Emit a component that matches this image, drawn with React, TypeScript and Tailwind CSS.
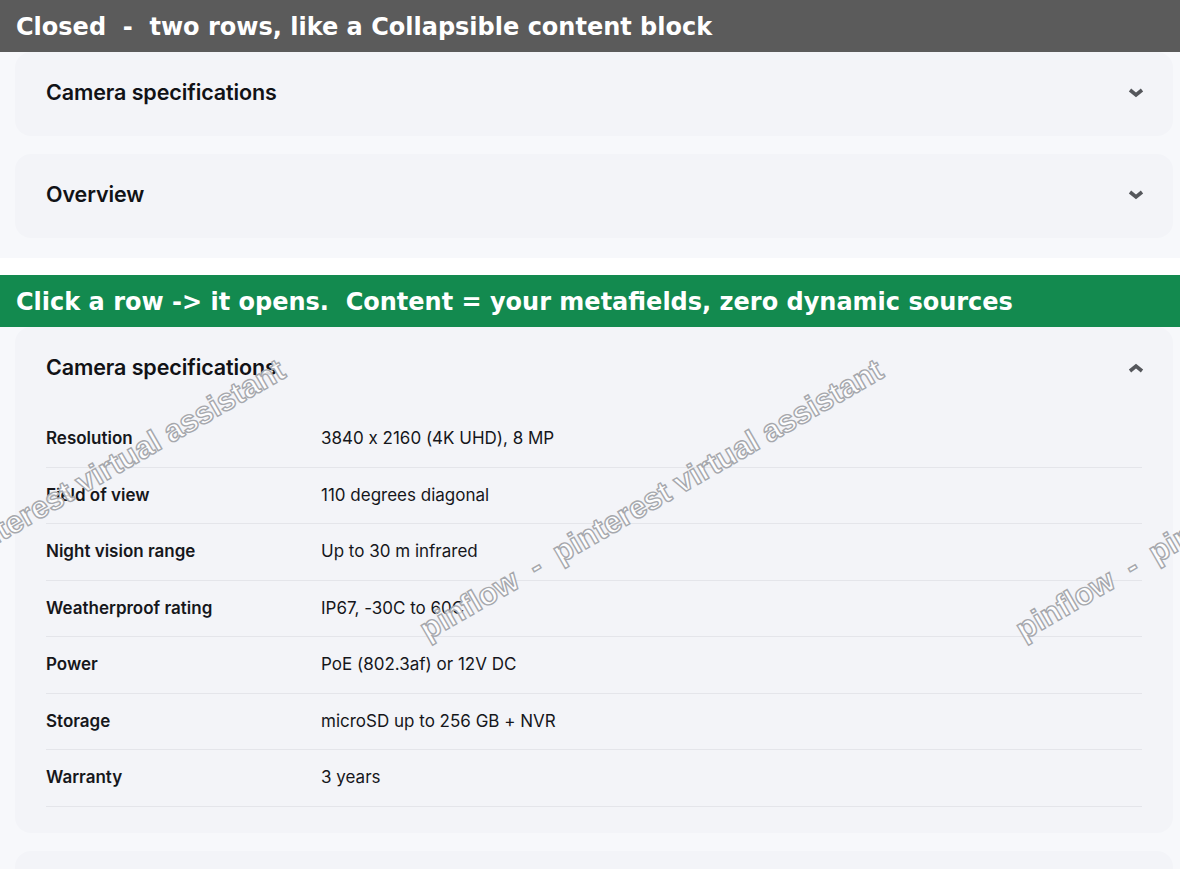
import { useState } from 'react';

interface Spec {
  label: string;
  value: string;
}

const specs: Spec[] = [
  { label: 'Resolution', value: '3840 x 2160 (4K UHD), 8 MP' },
  { label: 'Field of view', value: '110 degrees diagonal' },
  { label: 'Night vision range', value: 'Up to 30 m infrared' },
  { label: 'Weatherproof rating', value: 'IP67, -30C to 60C' },
  { label: 'Power', value: 'PoE (802.3af) or 12V DC' },
  { label: 'Storage', value: 'microSD up to 256 GB + NVR' },
  { label: 'Warranty', value: '3 years' },
];

const bodyFont = { fontFamily: 'Inter, "Noto Sans", sans-serif' };
const bannerFont = { fontFamily: '"DejaVu Sans", sans-serif' };

function Chevron({ up }: { up?: boolean }) {
  return (
    <svg width="16" height="10" viewBox="0 0 16 10" className="text-[#55575c]">
      <polyline
        points={up ? '2,8 8,3 14,8' : '2,2 8,7 14,2'}
        fill="none"
        stroke="currentColor"
        strokeWidth="3.6"
        strokeLinejoin="miter"
      />
    </svg>
  );
}

function Row({ title, open, onToggle, children }: {
  title: string;
  open: boolean;
  onToggle: () => void;
  children?: React.ReactNode;
}) {
  return (
    <div className="rounded-2xl bg-[#f3f4f8]">
      <button
        onClick={onToggle}
        className="flex h-[84px] w-full items-center justify-between pb-[3px] pl-[31px] pr-[29px] text-left"
      >
        <span className="text-[21.5px] font-semibold tracking-[-0.1px] text-[#111216]">{title}</span>
        <Chevron up={open} />
      </button>
      {open && <div className="px-[31px] pb-[26px]">{children}</div>}
    </div>
  );
}

function Watermark({ className }: { className: string }) {
  return (
    <div
      className={`pointer-events-none absolute origin-bottom-left rotate-[-30deg] whitespace-pre text-[31px] leading-none font-bold text-white/85 ${className}`}
      style={{ fontFamily: '"Liberation Sans", sans-serif', WebkitTextStroke: '1.4px #a6a8ad' }}
    >
      pinflow  -  pinterest virtual assistant
    </div>
  );
}

export default function App() {
  const [openA, setOpenA] = useState(false);
  const [openB, setOpenB] = useState(false);
  const [openC, setOpenC] = useState(true);
  const [openD, setOpenD] = useState(false);

  return (
    <div className="relative min-h-screen overflow-hidden bg-white" style={bodyFont}>
      {/* Closed state */}
      <div
        className="flex h-[52px] items-center whitespace-pre bg-[#5b5b5b] px-4 pt-[1px] text-[24px] font-bold text-white"
        style={bannerFont}
      >
        Closed  -  two rows, like a Collapsible content block
      </div>
      <div className="flex flex-col gap-[18px] bg-[#f7f8fb] pb-5 pl-[15px] pr-[7px]">
        <Row title="Camera specifications" open={openA} onToggle={() => setOpenA(!openA)} />
        <Row title="Overview" open={openB} onToggle={() => setOpenB(!openB)} />
      </div>
      <div className="h-[17px] bg-white" />

      {/* Open state */}
      <div
        className="flex h-[52px] items-center whitespace-pre bg-[#138a4f] px-4 pt-[1px] text-[24px] font-bold text-white"
        style={bannerFont}
      >
        Click a row -&gt; it opens.  Content = your metafields, zero dynamic sources
      </div>
      <div className="flex flex-col gap-[18px] bg-[#f7f8fb] pb-5 pl-[15px] pr-[7px]">
        <Row title="Camera specifications" open={openC} onToggle={() => setOpenC(!openC)}>
          <div className="flex flex-col [font-variant-ligatures:no-contextual]">
            {specs.map((s) => (
              <div
                key={s.label}
                className="flex h-[56.5px] items-center border-b border-[#e4e5ea] text-[17px] text-[#16171b]"
              >
                <span className="w-[275px] font-semibold">{s.label}</span>
                <span>{s.value}</span>
              </div>
            ))}
          </div>
        </Row>
        <Row title="Overview" open={openD} onToggle={() => setOpenD(!openD)} />
      </div>

      <Watermark className="left-[-168px] top-[614px]" />
      <Watermark className="left-[430px] top-[614px]" />
      <Watermark className="left-[1026px] top-[614px]" />
    </div>
  );
}
